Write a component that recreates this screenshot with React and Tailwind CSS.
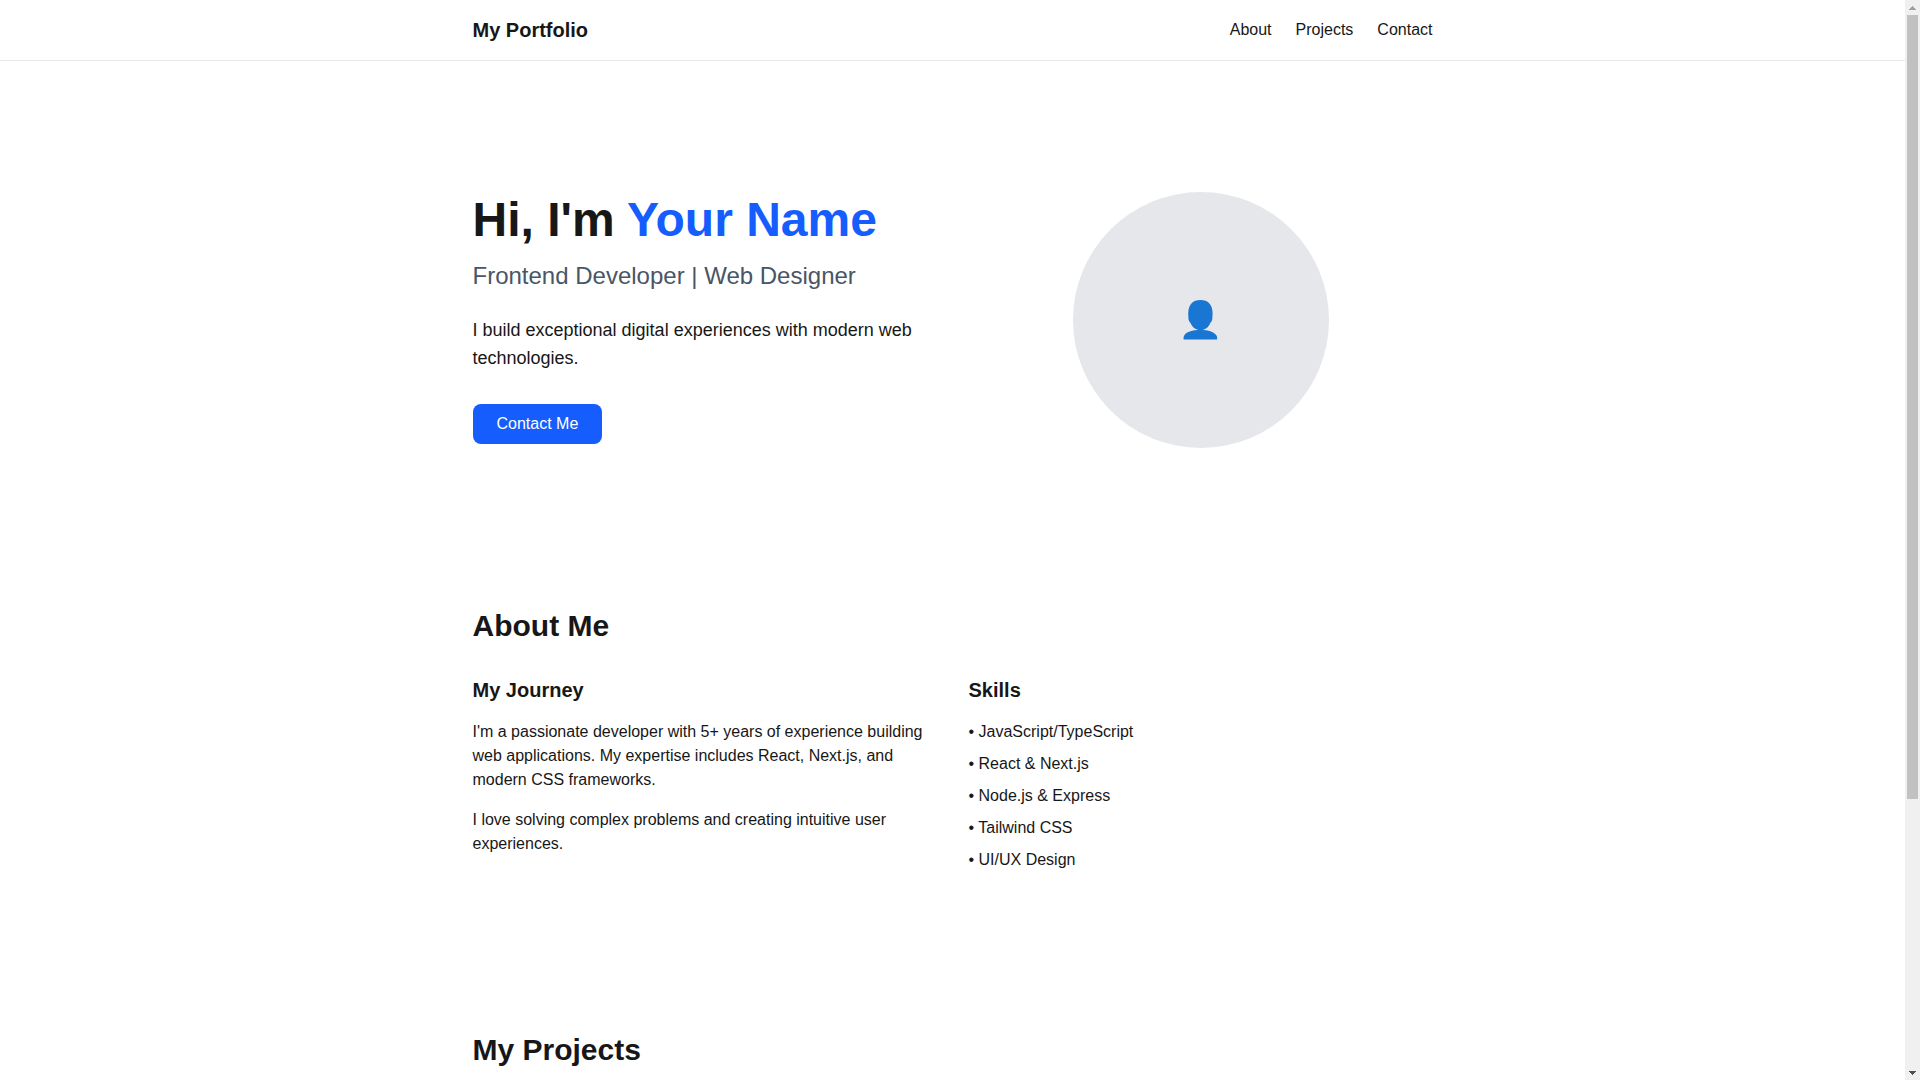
const NAV_LINKS = [
  { href: '#about', label: 'About' },
  { href: '#projects', label: 'Projects' },
  { href: '#contact', label: 'Contact' },
];

const SKILLS = [
  'JavaScript/TypeScript',
  'React & Next.js',
  'Node.js & Express',
  'Tailwind CSS',
  'UI/UX Design',
];

function Header() {
  return (
    <header className="sticky top-0 z-10 h-16">
      <div className="border-b border-gray-200 bg-white py-4">
        <div className="mx-auto flex max-w-5xl items-center justify-between px-8">
          <a href="#top" className="text-xl font-bold">
            My Portfolio
          </a>
          <nav className="flex gap-6">
            {NAV_LINKS.map((link) => (
              <a key={link.href} href={link.href} className="hover:text-blue-600">
                {link.label}
              </a>
            ))}
          </nav>
        </div>
      </div>
    </header>
  );
}

function Hero() {
  return (
    <section id="top" className="grid grid-cols-1 items-center gap-8 pb-20 pt-20 md:grid-cols-2">
      <div>
        <h1 className="mb-4 text-5xl font-bold">
          Hi, I'm <span className="text-blue-600">Your Name</span>
        </h1>
        <h2 className="mb-6 text-2xl text-gray-600">Frontend Developer | Web Designer</h2>
        <p className="mb-8 text-lg leading-7">
          I build exceptional digital experiences with modern web technologies.
        </p>
        <button
          type="button"
          className="block rounded-lg bg-blue-600 px-6 py-2 text-white transition-colors hover:bg-blue-700"
        >
          Contact Me
        </button>
      </div>
      <div className="flex justify-center">
        <div className="flex size-64 items-center justify-center rounded-full bg-gray-200">
          <span className="text-4xl">👤</span>
        </div>
      </div>
    </section>
  );
}

function About() {
  return (
    <section id="about" className="py-20">
      <h2 className="mb-8 text-3xl font-bold">About Me</h2>
      <div className="grid grid-cols-1 gap-8 md:grid-cols-2">
        <div>
          <h3 className="mb-4 text-xl font-semibold">My Journey</h3>
          <p className="mb-4">
            I'm a passionate developer with 5+ years of experience building web applications. My
            expertise includes React, Next.js, and modern CSS frameworks.
          </p>
          <p>I love solving complex problems and creating intuitive user experiences.</p>
        </div>
        <div>
          <h3 className="mb-4 text-xl font-semibold">Skills</h3>
          <ul className="space-y-2">
            {SKILLS.map((skill) => (
              <li key={skill}>• {skill}</li>
            ))}
          </ul>
        </div>
      </div>
    </section>
  );
}

function Projects() {
  return (
    <section id="projects" className="py-20">
      <h2 className="mb-8 text-3xl font-bold">My Projects</h2>
    </section>
  );
}

function ScrollBar() {
  return (
    <div className="flex w-[15px] shrink-0 flex-col bg-[#f0f0f0]" aria-hidden="true">
      <div className="flex h-[15px] items-center justify-center">
        <svg width="7" height="4" viewBox="0 0 7 4" fill="#a0a0a0" shapeRendering="crispEdges">
          <path d="M3 0h1v1h1v1h1v1h1v1H0V3h1V2h1V1h1z" />
        </svg>
      </div>
      <div className="flex flex-1 flex-col px-0.5">
        <div className="flex-[56] bg-[#c1c1c1]" />
        <div className="flex-[19]" />
      </div>
      <div className="flex h-[15px] items-center justify-center">
        <svg width="7" height="4" viewBox="0 0 7 4" fill="#505050" shapeRendering="crispEdges">
          <path d="M0 0h7v1H6v1H5v1H4v1H3V3H2V2H1V1H0z" />
        </svg>
      </div>
    </div>
  );
}

export default function App() {
  return (
    <div className="flex h-screen bg-white font-['Liberation_Sans',Arial,sans-serif] text-[#171717]">
      <div className="flex-1 overflow-y-auto [scrollbar-width:none]">
        <Header />
        <main className="mx-auto max-w-5xl px-8 py-12">
          <Hero />
          <About />
          <Projects />
        </main>
      </div>
      <ScrollBar />
    </div>
  );
}
